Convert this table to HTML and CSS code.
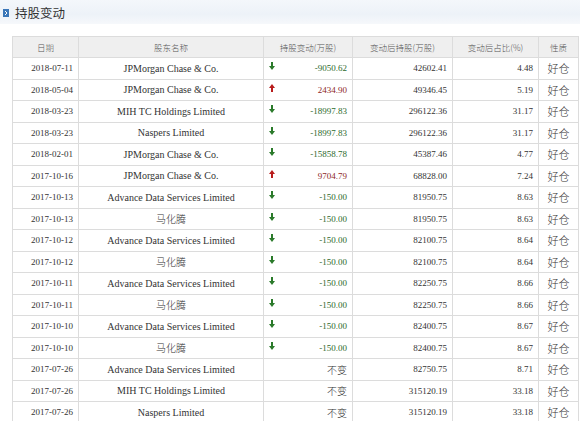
FILE: index.html
```html
<!DOCTYPE html>
<html>
<head>
<meta charset="utf-8">
<link rel="stylesheet" href="styles.css">
</head>
<body>
<div class="titlebar">
  <span class="ticon"><svg width="6" height="8" viewBox="0 0 6 8"><rect width="6" height="8" fill="#3a76b8"/><path d="M2 2 L4 4 L2 6" stroke="#fff" stroke-width="1" fill="none"/></svg></span>
  <span class="ttext">持股变动</span>
</div>
<div class="wrap">
<table class="grid">
  <colgroup>
    <col class="c1"><col class="c2"><col class="c3"><col class="c4"><col class="c5"><col class="c6">
  </colgroup>
  <thead>
    <tr><th>日期</th><th>股东名称</th><th>持股变动(万股)</th><th>变动后持股(万股)</th><th>变动后占比(%)</th><th>性质</th></tr>
  </thead>
  <tbody>
    <tr><td class="d">2018-07-11</td><td class="n">JPMorgan Chase &amp; Co.</td><td class="ch dn"><i class="ar"></i>-9050.62</td><td class="v">42602.41</td><td class="v">4.48</td><td class="x">好仓</td></tr>
    <tr><td class="d">2018-05-04</td><td class="n">JPMorgan Chase &amp; Co.</td><td class="ch up"><i class="ar"></i>2434.90</td><td class="v">49346.45</td><td class="v">5.19</td><td class="x">好仓</td></tr>
    <tr><td class="d">2018-03-23</td><td class="n">MIH TC Holdings Limited</td><td class="ch dn"><i class="ar"></i>-18997.83</td><td class="v">296122.36</td><td class="v">31.17</td><td class="x">好仓</td></tr>
    <tr><td class="d">2018-03-23</td><td class="n">Naspers Limited</td><td class="ch dn"><i class="ar"></i>-18997.83</td><td class="v">296122.36</td><td class="v">31.17</td><td class="x">好仓</td></tr>
    <tr><td class="d">2018-02-01</td><td class="n">JPMorgan Chase &amp; Co.</td><td class="ch dn"><i class="ar"></i>-15858.78</td><td class="v">45387.46</td><td class="v">4.77</td><td class="x">好仓</td></tr>
    <tr><td class="d">2017-10-16</td><td class="n">JPMorgan Chase &amp; Co.</td><td class="ch up"><i class="ar"></i>9704.79</td><td class="v">68828.00</td><td class="v">7.24</td><td class="x">好仓</td></tr>
    <tr><td class="d">2017-10-13</td><td class="n">Advance Data Services Limited</td><td class="ch dn"><i class="ar"></i>-150.00</td><td class="v">81950.75</td><td class="v">8.63</td><td class="x">好仓</td></tr>
    <tr><td class="d">2017-10-13</td><td class="n">马化腾</td><td class="ch dn"><i class="ar"></i>-150.00</td><td class="v">81950.75</td><td class="v">8.63</td><td class="x">好仓</td></tr>
    <tr><td class="d">2017-10-12</td><td class="n">Advance Data Services Limited</td><td class="ch dn"><i class="ar"></i>-150.00</td><td class="v">82100.75</td><td class="v">8.64</td><td class="x">好仓</td></tr>
    <tr><td class="d">2017-10-12</td><td class="n">马化腾</td><td class="ch dn"><i class="ar"></i>-150.00</td><td class="v">82100.75</td><td class="v">8.64</td><td class="x">好仓</td></tr>
    <tr><td class="d">2017-10-11</td><td class="n">Advance Data Services Limited</td><td class="ch dn"><i class="ar"></i>-150.00</td><td class="v">82250.75</td><td class="v">8.66</td><td class="x">好仓</td></tr>
    <tr><td class="d">2017-10-11</td><td class="n">马化腾</td><td class="ch dn"><i class="ar"></i>-150.00</td><td class="v">82250.75</td><td class="v">8.66</td><td class="x">好仓</td></tr>
    <tr><td class="d">2017-10-10</td><td class="n">Advance Data Services Limited</td><td class="ch dn"><i class="ar"></i>-150.00</td><td class="v">82400.75</td><td class="v">8.67</td><td class="x">好仓</td></tr>
    <tr><td class="d">2017-10-10</td><td class="n">马化腾</td><td class="ch dn"><i class="ar"></i>-150.00</td><td class="v">82400.75</td><td class="v">8.67</td><td class="x">好仓</td></tr>
    <tr><td class="d">2017-07-26</td><td class="n">Advance Data Services Limited</td><td class="ch same">不变</td><td class="v">82750.75</td><td class="v">8.71</td><td class="x">好仓</td></tr>
    <tr><td class="d">2017-07-26</td><td class="n">MIH TC Holdings Limited</td><td class="ch same">不变</td><td class="v">315120.19</td><td class="v">33.18</td><td class="x">好仓</td></tr>
    <tr><td class="d">2017-07-26</td><td class="n">Naspers Limited</td><td class="ch same">不变</td><td class="v">315120.19</td><td class="v">33.18</td><td class="x">好仓</td></tr>
  </tbody>
</table>
</div>
</body>
</html>
```
FILE: styles.css
```css
html, body {
  margin: 0;
  padding: 0;
  background: #fff;
  overflow: hidden;
}
body {
  font-family: "Liberation Serif", "Noto Sans CJK SC", serif;
  color: #333;
}
.titlebar {
  height: 24px;
  display: flex;
  align-items: center;
  gap: 6px;
  padding-left: 3px;
  background: linear-gradient(180deg, #f4f7fb 0%, #edf2f8 60%, #f6f8fb 100%);
}
.ticon {
  display: flex;
  margin-top: 1px;
}
.ttext {
  font-family: "Noto Sans CJK SC", sans-serif;
  font-size: 12.5px;
  color: #333;
}
.wrap {
  padding: 12px 3px 0 12px;
}
.grid {
  border-collapse: collapse;
  table-layout: fixed;
  width: 566px;
}
.c1 { width: 66px; }
.c2 { width: 185px; }
.c3 { width: 89px; }
.c4 { width: 100px; }
.c5 { width: 86px; }
.c6 { width: 40px; }
.grid th, .grid td {
  border: 1px solid #dcdcdc;
  padding: 0 5px;
  white-space: nowrap;
  overflow: hidden;
}
.grid th {
  height: 20px;
  background: #efefef;
  font-family: "Noto Sans CJK SC", sans-serif;
  font-weight: 300;
  font-size: 8.5px;
  color: #555;
  text-align: center;
}
.grid td {
  height: 20.5px;
  font-size: 9px;
  color: #333;
}
.d { text-align: right; font-size: 8.5px; }
.n { text-align: center; font-size: 10px !important; font-weight: 300; }
.v { text-align: right; }
.x {
  text-align: center;
  font-family: "Noto Sans CJK SC", sans-serif;
  font-weight: 300;
  font-size: 11px !important;
  color: #333;
}
.ch { text-align: right; position: relative; }
.ch.dn { color: #2d6a2d; }
.ch.up { color: #8e1f1f; }
.ch.same { font-family: "Noto Sans CJK SC", sans-serif; font-weight: 300; font-size: 10px; color: #333; }
.ar {
  position: absolute;
  left: 5px;
  top: 4px;
  width: 6px;
  height: 8px;
}
.dn .ar {
  background: linear-gradient(#2a7a2a, #2a7a2a) center top / 2px 4px no-repeat;
}
.dn .ar::after {
  content: "";
  position: absolute;
  left: 0;
  top: 4px;
  border-left: 3px solid transparent;
  border-right: 3px solid transparent;
  border-top: 4px solid #2a7a2a;
}
.up .ar {
  background: linear-gradient(#b81c1c, #b81c1c) center bottom / 2px 4px no-repeat;
}
.up .ar::after {
  content: "";
  position: absolute;
  left: 0;
  top: 0;
  border-left: 3px solid transparent;
  border-right: 3px solid transparent;
  border-bottom: 4px solid #b81c1c;
}
```
